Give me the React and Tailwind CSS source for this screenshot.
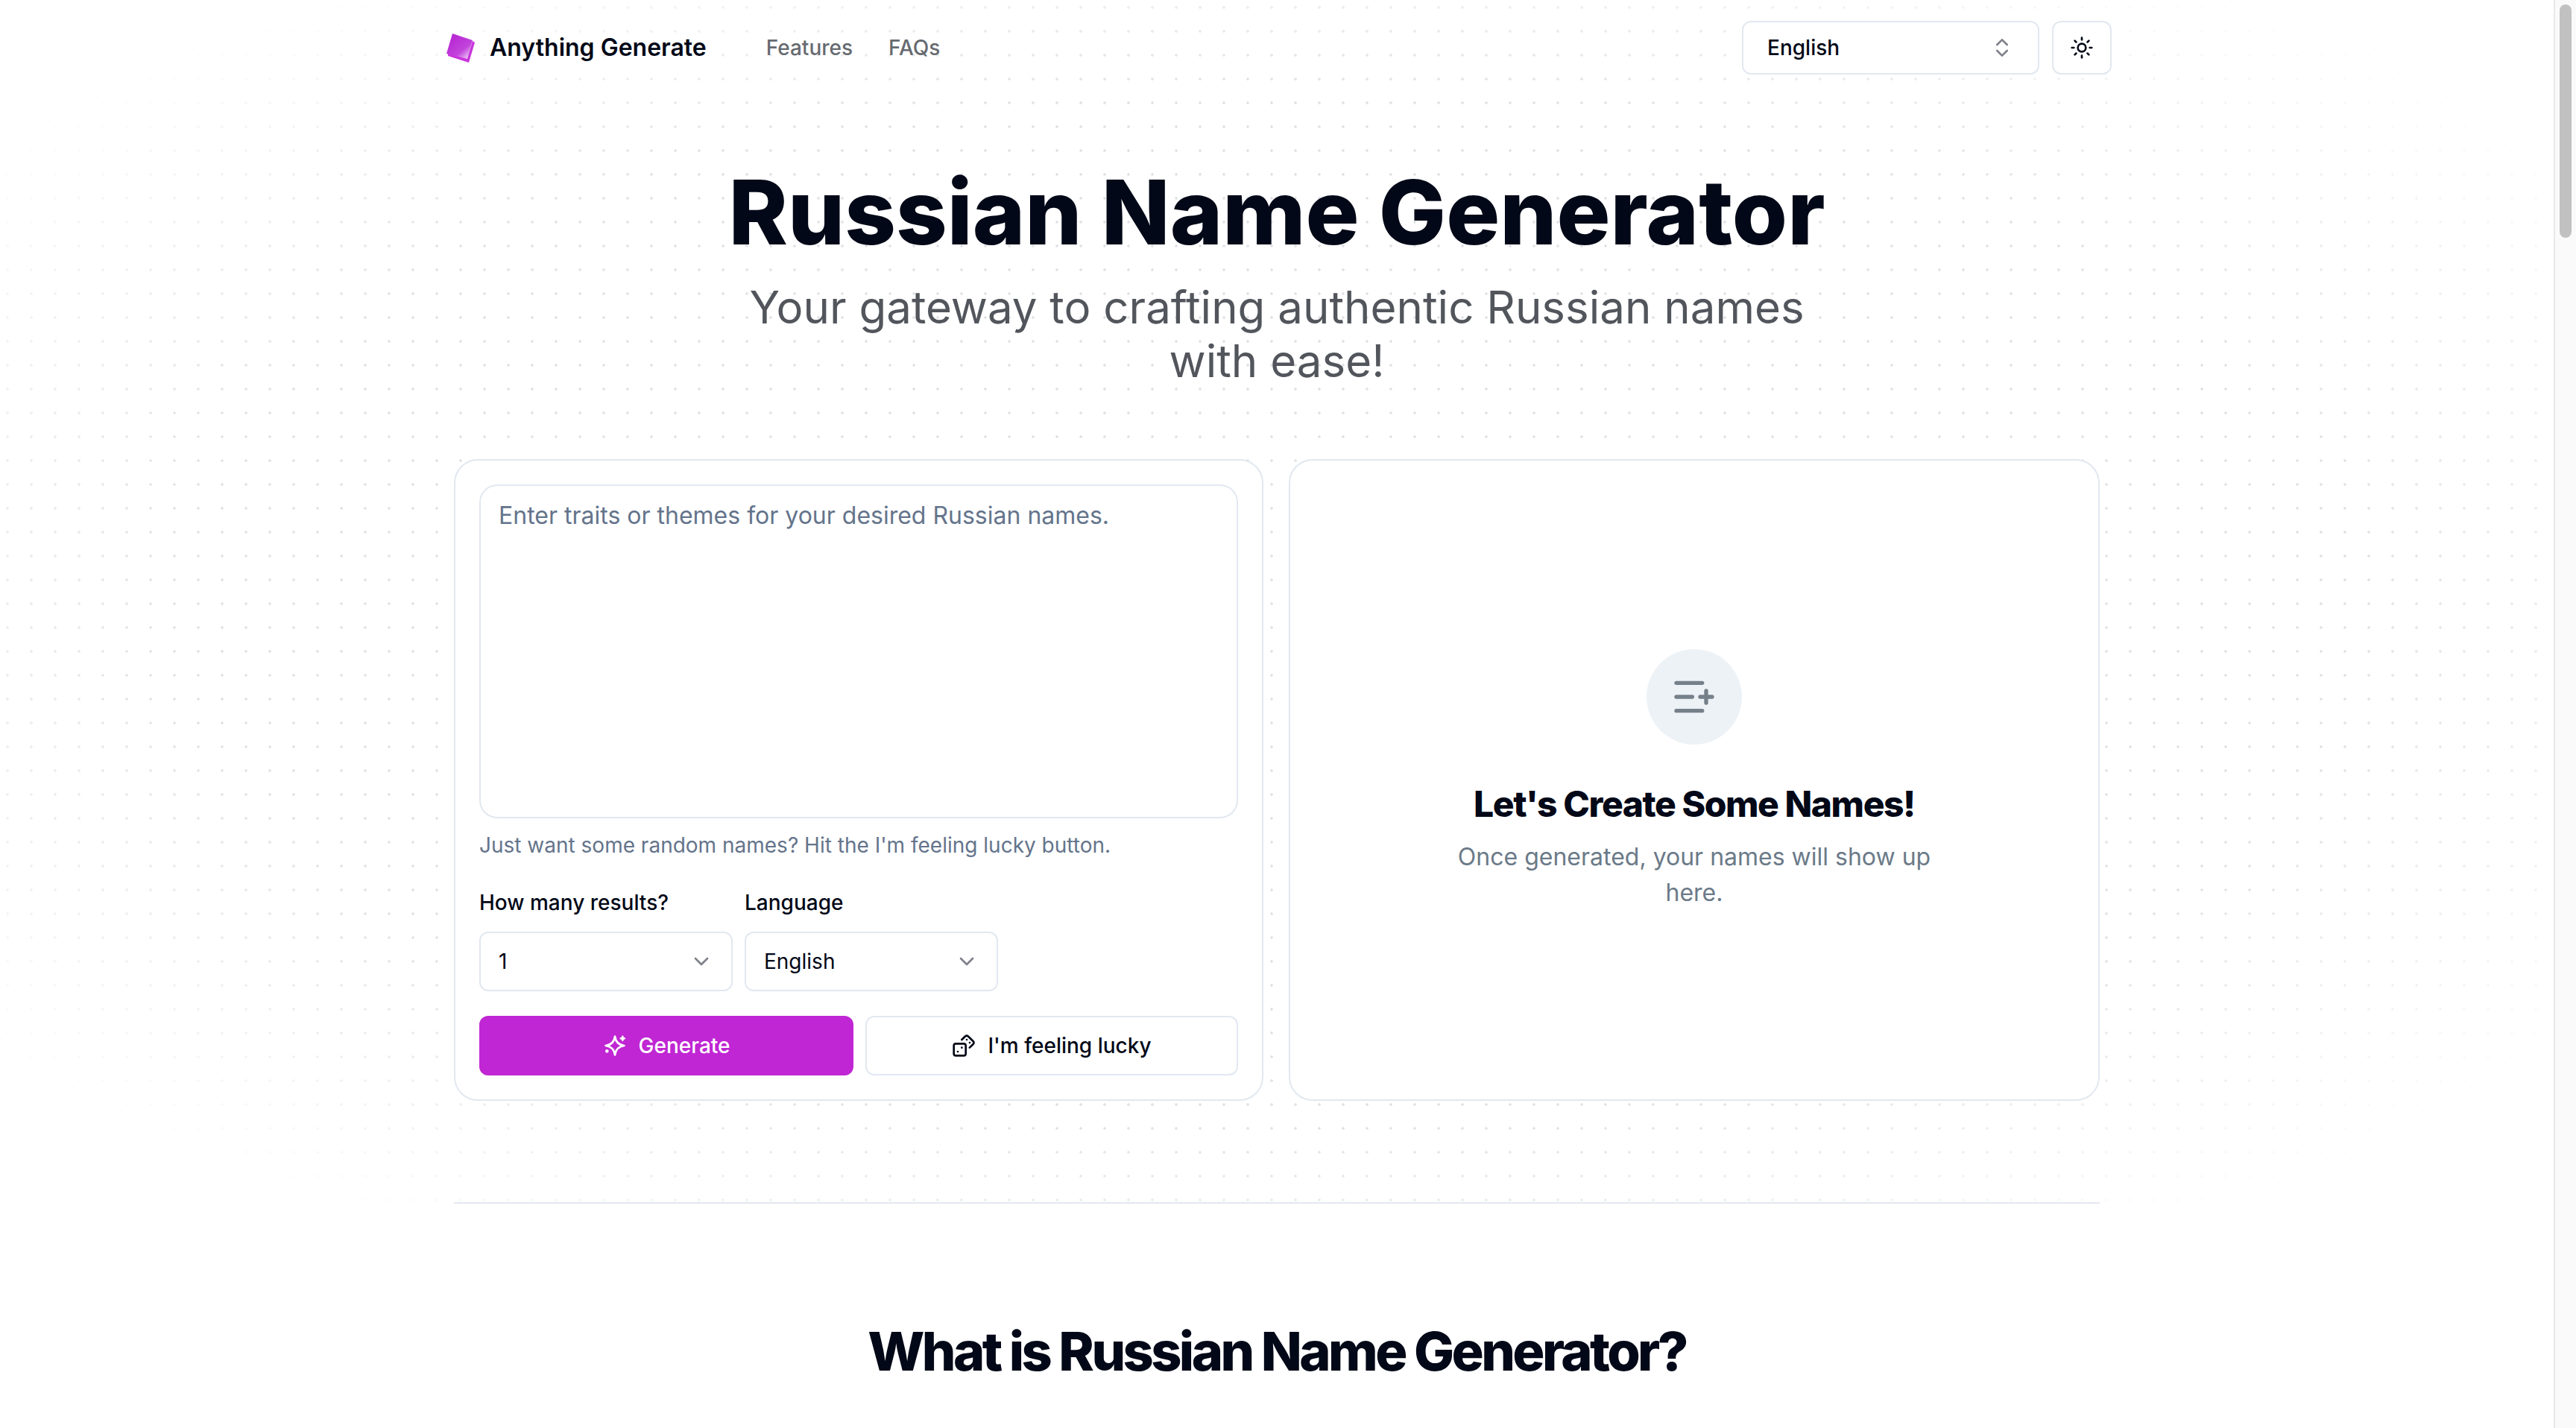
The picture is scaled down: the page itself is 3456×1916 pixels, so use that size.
import React from 'react';
import { ChevronDown, ChevronsUpDown, Dices, ListPlus, Sun } from 'lucide-react';

function Logo() {
  return (
    <svg width="40" height="40" viewBox="0 0 40 40" className="shrink-0">
      <defs>
        <linearGradient id="logo-fill" x1="0.25" y1="0.2" x2="0.95" y2="1">
          <stop offset="0" stopColor="#b92bd4" />
          <stop offset="0.55" stopColor="#c244dc" />
          <stop offset="1" stopColor="#f8e6fb" />
        </linearGradient>
      </defs>
      <polygon points="36,11 39,13 31,40 3,31 3,28 29,34" fill="#c935dc" />
      <polygon points="9,1 36,10 29,35 1,28" fill="url(#logo-fill)" />
    </svg>
  );
}

// four point star with a small plus and a dot, closer to the reference than lucide's Sparkles
function SparkIcon() {
  return (
    <svg width="32" height="32" viewBox="0 0 32 32" fill="none" stroke="currentColor" strokeWidth="2.67" strokeLinecap="round" strokeLinejoin="round" className="shrink-0 overflow-visible">
      <path d="M16 3.5C17 11 20.5 15 28.5 16C20.5 17 17 21 16 28.5C15 21 11.5 17 3.5 16C11.5 15 15 11 16 3.5Z" />
      <path d="M26.3 3.8v5M23.8 6.3h5" />
      <circle cx="5.3" cy="23.3" r="1" fill="currentColor" />
    </svg>
  );
}

function SelectBox({ value }) {
  return (
    <div className="flex h-[80px] w-[340px] items-center justify-between rounded-[12px] border-2 border-[#e2e8f0] bg-white px-6 text-[28px] text-[#020817]">
      <span>{value}</span>
      <ChevronDown size={32} className="text-[#020817] opacity-50" />
    </div>
  );
}

export default function App() {
  return (
    <div className="relative flex h-[1916px] w-[3456px] overflow-hidden bg-white font-['Inter',sans-serif] text-[#020817]">
      {/* dotted backdrop */}
      <div className="absolute left-0 top-0 h-[1622px] w-[3426px] bg-[radial-gradient(#e2e3e6_1.5px,transparent_2px)] bg-[length:32px_32px] bg-[position:-6px_-6px] [mask-image:radial-gradient(ellipse_at_center,black_60%,transparent_90%)]" />

      <main className="relative w-[3426px] shrink-0">
        <nav className="ml-[598px] flex h-[128px] w-[2235px] items-center">
          <Logo />
          <span className="ml-[19px] text-[32px] font-semibold">Anything Generate</span>
          <div className="ml-[80px] flex gap-[48px] text-[28px] font-medium text-[#666a70]">
            <span>Features</span>
            <span>FAQs</span>
          </div>
          <div className="ml-auto flex gap-[17px]">
            <div className="flex h-[72px] w-[399px] items-center justify-between rounded-[12px] border-2 border-[#e2e8f0] bg-white px-8 text-[28px] font-medium">
              <span>English</span>
              <ChevronsUpDown size={32} className="opacity-50" />
            </div>
            <div className="flex h-[72px] w-[80px] items-center justify-center rounded-[12px] border-2 border-[#e2e8f0] bg-white">
              <Sun size={32} />
            </div>
          </div>
        </nav>

        <div className="mx-auto w-[2208px]">
          <h1 className="mt-[97px] text-center text-[120px] font-extrabold leading-[120px]">
            Russian Name Generator
          </h1>
          <p className="mx-auto mt-[31px] w-[1500px] text-center text-[60px] leading-[72px] text-[#52565c]">
            Your gateway to crafting authentic Russian names with ease!
          </p>

          <div className="mt-[96px] grid grid-cols-[1086px_1088px] gap-[34px]">
            <section className="rounded-[32px] border-2 border-[#e2e8f0] bg-white p-8">
              <div className="h-[448px] rounded-[24px] border-2 border-[#e2e8f0] bg-white px-6 py-4 text-[32px] leading-[48px] text-[#64748b]">
                Enter traits or themes for your desired Russian names.
              </div>
              <p className="mt-4 text-[28px] leading-[40px] text-[#64748b]">
                Just want some random names? Hit the I'm feeling lucky button.
              </p>
              <div className="mt-[37px] flex gap-4">
                <div className="w-[340px]">
                  <div className="text-[28px] font-medium leading-[40px]">How many results?</div>
                  <div className="mt-[19px]">
                    <SelectBox value="1" />
                  </div>
                </div>
                <div className="w-[340px]">
                  <div className="text-[28px] font-medium leading-[40px]">Language</div>
                  <div className="mt-[19px]">
                    <SelectBox value="English" />
                  </div>
                </div>
              </div>
              <div className="mt-[33px] grid grid-cols-[502px_500px] gap-4">
                <button className="flex h-[80px] items-center justify-center gap-4 rounded-[12px] bg-[#c026d3] text-[28px] font-medium text-white">
                  <SparkIcon />
                  Generate
                </button>
                <button className="flex h-[80px] items-center justify-center gap-4 rounded-[12px] border-2 border-[#e2e8f0] bg-white text-[28px] font-medium">
                  <Dices size={32} />
                  I'm feeling lucky
                </button>
              </div>
            </section>

            <section className="flex flex-col items-center justify-center rounded-[32px] border-2 border-[#e2e8f0] bg-white p-8">
              <div className="flex h-[128px] w-[128px] items-center justify-center rounded-full bg-[#edf2f6]">
                <ListPlus size={64} className="text-[#75808a]" />
              </div>
              <h3 className="mt-[48px] text-[48px] font-extrabold leading-[64px] tracking-[-0.03em]">Let's Create Some Names!</h3>
              <p className="mt-[15px] w-[660px] text-center text-[32px] leading-[48px] text-[#6b7a88]">
                Once generated, your names will show up here.
              </p>
            </section>
          </div>

          <div className="mt-[136px] h-[2px] bg-[#e2e8f0]" />

          <h2 className="mt-[150px] text-center text-[72px] font-extrabold leading-[96px] tracking-[-0.05em]">
            What is Russian Name Generator?
          </h2>
        </div>
      </main>

      {/* scrollbar */}
      <aside className="relative w-[30px] shrink-0 border-l-2 border-[#e8e8e8] bg-[#fafafa] pl-[6px] pt-[6px]">
        <div className="h-[313px] w-4 rounded-full bg-[#c1c1c1]" />
      </aside>
    </div>
  );
}
